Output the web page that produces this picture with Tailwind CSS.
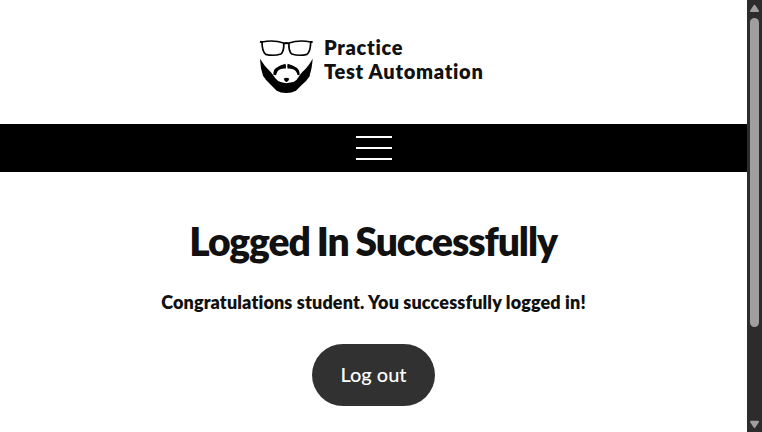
<!DOCTYPE html>
<html lang="en">
<head>
<meta charset="utf-8">
<title>Logged In Successfully</title>
<script src="https://cdn.jsdelivr.net/npm/@tailwindcss/browser@4"></script>
</head>
<body class="flex h-[432px] w-[762px] overflow-hidden bg-white font-[Lato,sans-serif] text-[#111111]">
<main class="flex w-[747px] flex-col">
  <header class="flex h-[124px] shrink-0 pt-[30px] pl-[250px]">
    <svg class="h-[70px] w-[74px] shrink-0" viewBox="0 0 222 210" fill="none">
      <g stroke="#000" stroke-width="5" stroke-linejoin="round">
        <path d="M36 36Q71 29 101 39Q103 62 93 72Q70 79 47 73Q36 64 36 36Z"/>
        <path d="M182 36Q147 29 117 39Q115 62 125 72Q148 79 171 73Q182 64 182 36Z"/>
        <path d="M101 41Q109 37 117 41M30 35L38 37M188 35L180 37" stroke-width="6"/>
      </g>
      <g fill="#000">
        <path d="M30 86Q45 111 62 126Q71 137 76 145Q84 156 94 157L109 160L125 157Q136 156 143 145Q148 136 157 126Q174 111 188 86Q186 115 179 135L180 137Q170 153 155 165L138 182Q126 189 109 189Q91 189 80 182L63 165Q47 151 39 137Q31 115 30 86Z"/>
        <path d="M106 101Q110 107 107 116Q99 115 91 118Q82 120 78 136L70 134Q70 119 78 114Q90 105 106 101Z"/>
        <path d="M113 101Q110 107 113 116Q121 115 129 118Q139 121 143 136L149 134Q149 119 140 113Q129 105 113 101Z"/>
        <path d="M101 146Q109 141 118 146L115 152L109 157L104 152Z"/>
      </g>
    </svg>
    <div class="pt-[5px] text-[20px] leading-6 font-extrabold tracking-[0.7px] whitespace-nowrap">Practice<br>Test Automation</div>
  </header>
  <nav class="flex h-12 shrink-0 justify-center bg-black pt-3">
    <button aria-label="Open menu" class="flex h-6 w-9 flex-col justify-between">
      <span class="h-0.5 w-full bg-white"></span>
      <span class="h-0.5 w-full bg-white"></span>
      <span class="h-0.5 w-full bg-white"></span>
    </button>
  </nav>
  <section class="flex flex-col items-center whitespace-nowrap">
    <h1 class="mt-[45px] mb-px pr-px text-[39px] leading-[48px] font-extrabold tracking-[-1.08px] [word-spacing:-1px]">Logged In Successfully</h1>
    <p class="mt-[22px] text-[18px] leading-7 font-extrabold tracking-[0.13px]">Congratulations student. You successfully logged in!</p>
    <a class="mt-7 flex h-[62px] w-[123px] items-center justify-center rounded-full bg-[#313131] pb-0.5 text-[20px] font-medium text-white">Log out</a>
  </section>
</main>
<aside class="flex h-full w-[15px] flex-col items-center bg-[#2c2c2c]">
  <svg class="h-[18px] w-[15px]" viewBox="0 0 15 18"><path d="M7.5 5.8L11 11H4Z" fill="#9f9f9f" stroke="#9f9f9f" stroke-width="2" stroke-linejoin="round"/></svg>
  <div class="h-[309px] w-[9px] rounded-full bg-[#9f9f9f]"></div>
  <svg class="mt-auto h-[18px] w-[15px]" viewBox="0 0 15 18"><path d="M7.5 13L4 7.8H11Z" fill="#9f9f9f" stroke="#9f9f9f" stroke-width="2" stroke-linejoin="round"/></svg>
</aside>
</body>
</html>
